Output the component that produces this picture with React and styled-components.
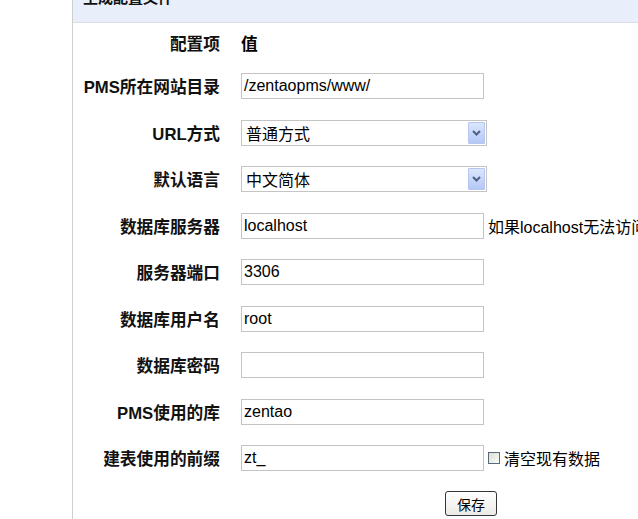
import styled, { createGlobalStyle } from "styled-components"

const Global = createGlobalStyle`
  html, body {
    margin: 0;
    padding: 0;
    background: #fff;
    overflow: hidden;
  }
  body {
    font-family: "Liberation Sans", Arial, "Noto Sans CJK SC", sans-serif;
    color: #000;
  }
`

const Page = styled.div`
  padding-left: 72px;
  margin-top: -11px;
  width: 1000px;
`

const Panel = styled.div`
  border-left: 1px solid #cfcfcf;
  min-height: 540px;
`

const Header = styled.div`
  height: 33px;
  padding: 0 10px;
  background: #e8eefa;
  border-bottom: 1px solid #d9dee6;
  font-size: 15px;
  font-weight: bold;
  line-height: 18px;
  color: #111;
`

const Table = styled.table`
  width: 796px;
  border-collapse: collapse;
  font-size: 16px;
`

const HeadRow = styled.tr`
  height: 40px;
`

const Row = styled.tr`
  height: 46.5px;
`

const Label = styled.th`
  width: 147px;
  padding: 0 10px 0 0;
  text-align: right;
  font-size: 16.7px;
  font-weight: bold;
  white-space: nowrap;
  color: #111;
`

const Cell = styled.td`
  padding: 0 0 0 11px;
  text-align: left;
  font-size: 16.7px;
  font-weight: ${(p) => (p.$bold ? "bold" : "normal")};
`

const Field = styled.div`
  display: flex;
  align-items: center;
  gap: 4px;
  white-space: nowrap;
  font-size: 16px;
`

const TextInput = styled.input`
  box-sizing: border-box;
  width: 243px;
  height: 26px;
  margin: 0;
  padding: 0 2px;
  border: 1px solid #c4c4c4;
  font: inherit;
  font-size: 16px;
  color: #000;
  outline: none;
`

const SelectBox = styled.div`
  box-sizing: border-box;
  width: 246px;
  height: 26px;
  display: flex;
  align-items: center;
  border: 1px solid #c4c4c4;
  padding: 0 1px 0 4px;
`

const SelectText = styled.span`
  flex: 1;
`

const Arrow = styled.span`
  width: 15px;
  height: 20px;
  display: flex;
  align-items: center;
  justify-content: center;
  border: 1px solid #b6c6ef;
  border-radius: 1px;
  background: linear-gradient(#dbe6fd, #b4c8f7);
`

const Hint = styled.span`
  font-size: 16px;
`

const Check = styled.span`
  box-sizing: border-box;
  width: 12px;
  height: 12px;
  border: 1px solid #5a6a7c;
  background: linear-gradient(135deg, #dcdcd6, #fbfbf9);
`

const ButtonRow = styled.tr`
  height: 44px;
`

const ButtonCell = styled.td`
  text-align: center;
  padding: 0;
`

const SaveButton = styled.button`
  width: 52px;
  height: 25px;
  padding: 0;
  border: 1px solid #33363a;
  border-radius: 3px;
  background: linear-gradient(#ffffff, #ecebe6);
  font-family: "Noto Sans CJK SC", sans-serif;
  font-size: 14px;
  color: #000;
`

function Chevron() {
  return (
    <svg width="9" height="6" viewBox="0 0 9 6">
      <path d="M1 1 L4.5 4.5 L8 1" fill="none" stroke="#4d6185" strokeWidth="2" />
    </svg>
  )
}

const rows = [
  { label: "PMS所在网站目录", value: "/zentaopms/www/" },
  { label: "URL方式", select: "普通方式" },
  { label: "默认语言", select: "中文简体" },
  { label: "数据库服务器", value: "localhost", hint: "如果localhost无法访问，请尝试使用127.0.0.1" },
  { label: "服务器端口", value: "3306" },
  { label: "数据库用户名", value: "root" },
  { label: "数据库密码", value: "" },
  { label: "PMS使用的库", value: "zentao" },
  { label: "建表使用的前缀", value: "zt_", check: "清空现有数据" },
]

export default function App() {
  return (
    <>
      <Global />
      <Page>
        <Panel>
          <Header>生成配置文件</Header>
          <Table>
            <tbody>
              <HeadRow>
                <Label>配置项</Label>
                <Cell $bold>值</Cell>
              </HeadRow>
              {rows.map((r) => (
                <Row key={r.label}>
                  <Label>{r.label}</Label>
                  <Cell>
                    <Field>
                      {r.select ? (
                        <SelectBox>
                          <SelectText>{r.select}</SelectText>
                          <Arrow>
                            <Chevron />
                          </Arrow>
                        </SelectBox>
                      ) : (
                        <TextInput defaultValue={r.value} />
                      )}
                      {r.hint && <Hint>{r.hint}</Hint>}
                      {r.check && (
                        <>
                          <Check />
                          <Hint>{r.check}</Hint>
                        </>
                      )}
                    </Field>
                  </Cell>
                </Row>
              ))}
              <ButtonRow>
                <ButtonCell colSpan={2}>
                  <SaveButton>保存</SaveButton>
                </ButtonCell>
              </ButtonRow>
            </tbody>
          </Table>
        </Panel>
      </Page>
    </>
  )
}
